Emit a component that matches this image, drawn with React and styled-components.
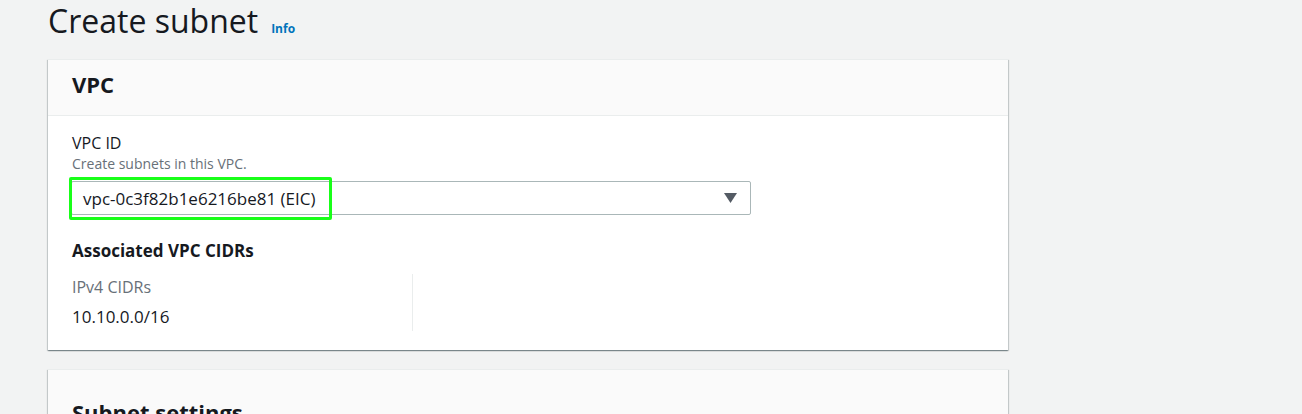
import React from "react";
import styled, { createGlobalStyle } from "styled-components";

const Global = createGlobalStyle`
  html, body { margin: 0; padding: 0; background: #f2f3f3; }
  body { font-family: "Open Sans", "Noto Sans", sans-serif; color: #16191f; }
  * { box-sizing: border-box; }
`;

const Page = styled.div`
  width: 1302px;
  height: 414px;
  overflow: hidden;
  padding: 0 0 0 48px;
`;

const Column = styled.div`
  width: 960px;
  display: flex;
  flex-direction: column;
`;

const TitleRow = styled.div`
  display: flex;
  align-items: baseline;
  gap: 13px;
  height: 59px;
  padding-top: 1px;
`;

const Title = styled.h1`
  margin: 0;
  font-size: 32px;
  font-weight: 400;
  line-height: 40px;
  color: #16191f;
`;

const InfoLink = styled.a`
  font-size: 12px;
  font-weight: 700;
  color: #0073bb;
  text-decoration: none;
`;

const Card = styled.section`
  background: #ffffff;
  box-shadow: 0 1px 1px 0 rgba(0, 28, 36, 0.3), 1px 1px 1px 0 rgba(0, 28, 36, 0.15),
    -1px 1px 1px 0 rgba(0, 28, 36, 0.15);
  border-top: 1px solid #eaeded;
  margin-top: ${(p) => p.$gap || 0}px;
`;

const CardHeader = styled.div`
  background: #fafafa;
  border-bottom: 1px solid #eaeded;
  padding: ${(p) => p.$top}px 24px ${(p) => p.$bottom}px;
`;

const CardTitle = styled.h2`
  margin: 0;
  font-size: 22px;
  font-weight: 700;
  line-height: 28px;
  color: #16191f;
`;

const CardBody = styled.div`
  padding: 16px 24px 19px;
`;

const Field = styled.div`
  display: flex;
  flex-direction: column;
`;

const Label = styled.div`
  font-size: 16px;
  line-height: 22px;
  color: #16191f;
`;

const Description = styled.div`
  font-size: 14px;
  line-height: 20px;
  color: #687078;
  margin-bottom: 7px;
`;

const SelectWrap = styled.div`
  position: relative;
  width: 680px;
  margin-left: -1px;
`;

const Select = styled.div`
  height: 34px;
  border: 1px solid #aab7b8;
  border-radius: 2px;
  background: #fff;
  display: flex;
  align-items: center;
  justify-content: space-between;
  padding: 0 13px 0 11px;
  font-size: 17px;
  color: #16191f;
`;

const Highlight = styled.div`
  position: absolute;
  left: -2px;
  top: -4px;
  width: 263px;
  height: 43px;
  border: 3px solid #19ff19;
  border-radius: 2px;
  pointer-events: none;
`;

const SubHeading = styled.h3`
  margin: 24px 0 0;
  font-size: 17px;
  font-weight: 700;
  line-height: 24px;
`;

const Columns = styled.div`
  display: grid;
  grid-template-columns: 340px 340px;
  margin-top: 11px;
`;

const Col = styled.div`
  display: flex;
  flex-direction: column;
  gap: 7px;
  padding: 2px 0;
  & + & {
    border-left: 1px solid #eaeded;
    padding-left: 20px;
  }
`;

const KeyLabel = styled.div`
  font-size: 16px;
  line-height: 22px;
  color: #687078;
`;

const Value = styled.div`
  font-size: 17px;
  line-height: 24px;
  color: #16191f;
  min-height: 24px;
`;

const Caret = () => (
  <svg width="13" height="10" viewBox="0 0 13 10">
    <path d="M0 0 H13 L6.5 10 Z" fill="#545b64" />
  </svg>
);

export default function App() {
  return (
    <>
      <Global />
      <Page>
        <Column>
          <TitleRow>
            <Title>Create subnet</Title>
            <InfoLink href="#">Info</InfoLink>
          </TitleRow>
          <Card>
            <CardHeader $top={10} $bottom={17}>
              <CardTitle>VPC</CardTitle>
            </CardHeader>
            <CardBody>
              <Field>
                <Label>VPC ID</Label>
                <Description>Create subnets in this VPC.</Description>
                <SelectWrap>
                  <Select>
                    <span>vpc-0c3f82b1e6216be81 (EIC)</span>
                    <Caret />
                  </Select>
                  <Highlight />
                </SelectWrap>
              </Field>
              <SubHeading>Associated VPC CIDRs</SubHeading>
              <Columns>
                <Col>
                  <KeyLabel>IPv4 CIDRs</KeyLabel>
                  <Value>10.10.0.0/16</Value>
                </Col>
                <Col>
                  <KeyLabel>&nbsp;</KeyLabel>
                  <Value />
                </Col>
              </Columns>
            </CardBody>
          </Card>
          <Card $gap={19}>
            <CardHeader $top={28} $bottom={17}>
              <CardTitle>Subnet settings</CardTitle>
            </CardHeader>
          </Card>
        </Column>
      </Page>
    </>
  );
}
